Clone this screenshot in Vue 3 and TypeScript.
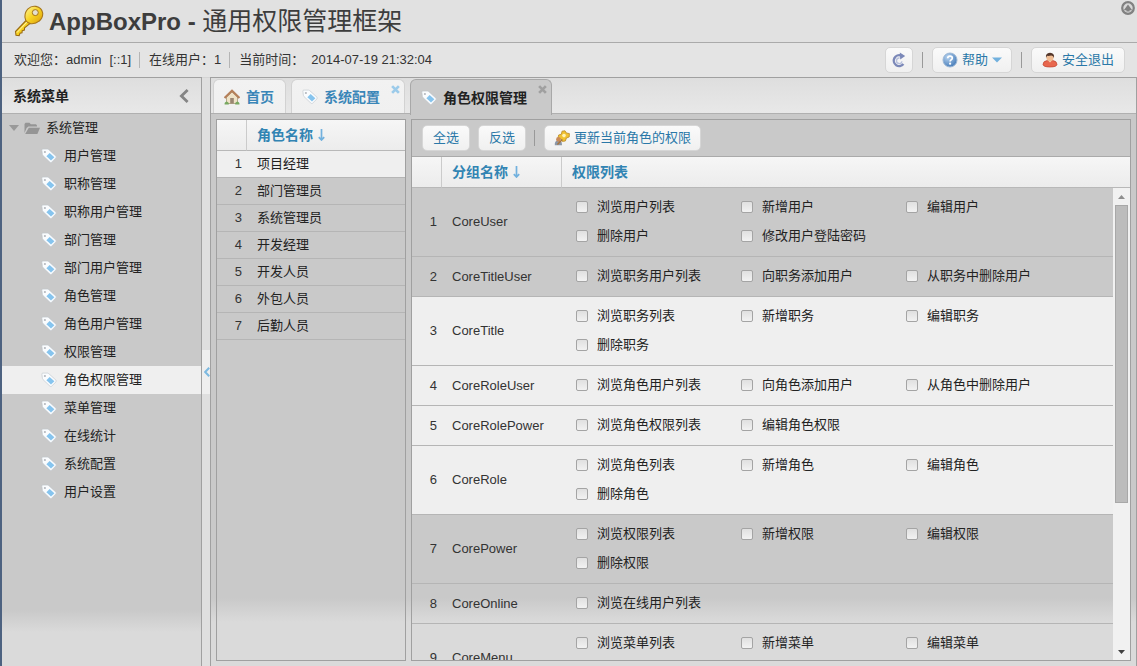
<script setup lang="ts">
import { ref } from 'vue'

interface Role { id: number; name: string }
interface PowerGroup { id: number; name: string; selected: boolean; powers: string[] }

const menu: string[] = [
  '用户管理', '职称管理', '职称用户管理', '部门管理', '部门用户管理', '角色管理', '角色用户管理',
  '权限管理', '角色权限管理', '菜单管理', '在线统计', '系统配置', '用户设置',
]
const activeMenu = ref('角色权限管理')

const roles: Role[] = ['项目经理', '部门管理员', '系统管理员', '开发经理', '开发人员', '外包人员', '后勤人员']
  .map((name, i) => ({ id: i + 1, name }))
const activeRole = ref(1)

const groups = ref<PowerGroup[]>([
  { id: 1, name: 'CoreUser', selected: false, powers: ['浏览用户列表', '新增用户', '编辑用户', '删除用户', '修改用户登陆密码'] },
  { id: 2, name: 'CoreTitleUser', selected: false, powers: ['浏览职务用户列表', '向职务添加用户', '从职务中删除用户'] },
  { id: 3, name: 'CoreTitle', selected: true, powers: ['浏览职务列表', '新增职务', '编辑职务', '删除职务'] },
  { id: 4, name: 'CoreRoleUser', selected: true, powers: ['浏览角色用户列表', '向角色添加用户', '从角色中删除用户'] },
  { id: 5, name: 'CoreRolePower', selected: true, powers: ['浏览角色权限列表', '编辑角色权限'] },
  { id: 6, name: 'CoreRole', selected: true, powers: ['浏览角色列表', '新增角色', '编辑角色', '删除角色'] },
  { id: 7, name: 'CorePower', selected: false, powers: ['浏览权限列表', '新增权限', '编辑权限', '删除权限'] },
  { id: 8, name: 'CoreOnline', selected: false, powers: ['浏览在线用户列表'] },
  { id: 9, name: 'CoreMenu', selected: false, powers: ['浏览菜单列表', '新增菜单', '编辑菜单', '删除菜单'] },
])
const checked = ref<string[]>([])

function allKeys(): string[] {
  return groups.value.flatMap((g) => g.powers.map((p) => g.name + p))
}
function selectAll(): void {
  checked.value = allKeys()
}
function invert(): void {
  checked.value = allKeys().filter((k) => !checked.value.includes(k))
}
</script>

<template>
  <div class="app">
    <svg class="defs" aria-hidden="true">
      <defs>
        <linearGradient id="gold" x1="0" y1="0" x2="1" y2="1">
          <stop offset="0" stop-color="#fff6a0" />
          <stop offset="0.5" stop-color="#f7d21f" />
          <stop offset="1" stop-color="#d99a10" />
        </linearGradient>
        <radialGradient id="orb" cx="0.35" cy="0.3" r="0.8">
          <stop offset="0" stop-color="#b8d4f0" />
          <stop offset="1" stop-color="#3c74b4" />
        </radialGradient>
      </defs>
      <symbol id="tag" viewBox="0 0 16 16">
        <path d="M0.9 2.2 Q0.8 1.2 1.8 1.1 L6.4 1.1 Q7.2 1.2 7.8 1.7 L15 8.2 Q15.7 9 15 9.8 L10.6 14.2 Q9.8 14.9 9 14.2 L2 7.6 Q1.5 7 1.4 6.4 Z" fill="#fafcfe" stroke="#bcc3ca" stroke-width="0.6" />
        <circle cx="3.9" cy="4" r="1.1" fill="#b4b9bf" />
        <path d="M8.6 4.9 L13.4 9.2 L10 12.6 L5.4 8.2 Z" fill="#86c4ee" />
      </symbol>
    </svg>

    <header class="banner">
      <svg class="key" viewBox="0 0 32 32" aria-hidden="true">
        <path d="M14 14.5 L2.5 26.5 L3 30.2 L6.2 30.6 L7 28.2 L9 27.8 L9.2 25.6 L11.4 25 L11.6 22.8 L18.2 17.6 Z" fill="url(#gold)" stroke="#9a6b12" stroke-width="1.1" />
        <path d="M4 27.5 L15 16" stroke="#fff4a8" stroke-width="1" />
        <path d="M15 3.8 Q18.5 0.5 23 1.4 Q28.8 2.6 29.7 8 Q30 13 26 16.2 Q22.5 19.2 17.4 18.6 Q12.6 17.4 12 12.5 Q11.6 7 15 3.8 Z" fill="url(#gold)" stroke="#a6761a" stroke-width="1.1" />
        <circle cx="22.3" cy="7.6" r="3" fill="#e4e0cf" stroke="#a6761a" stroke-width="1" />
      </svg>
      <h1>AppBoxPro - <span>通用权限管理框架</span></h1>
      <button class="collapse-top" aria-label="折叠">
        <svg viewBox="0 0 14 14"><circle cx="7" cy="7" r="5.8" fill="#d8d8d8" stroke="#818181" stroke-width="2.2" /><path d="M2.8 9.2 L7 3.6 L11.2 9.2 H8.6 V10.6 H5.4 V9.2 Z" fill="#818181" /></svg>
      </button>
    </header>

    <div class="statusbar">
      <span>欢迎您：admin</span><span class="ip">[::1]</span>
      <i class="sep"></i>
      <span>在线用户：1</span>
      <i class="sep"></i>
      <span>当前时间：</span><time class="time">2014-07-19 21:32:04</time>
      <div class="actions">
        <button class="btn icon-only" aria-label="刷新">
          <svg class="ico" viewBox="0 0 16 16"><path d="M12.4 12 A5.4 5.4 0 1 1 10.2 3.6" fill="none" stroke="#7b88b8" stroke-width="2.4" /><path d="M8.8 0.4 L14.2 4 L9.2 7.4 Z" fill="#7b88b8" /><path d="M11 9.4 A2.8 2.8 0 1 1 8.6 6" fill="none" stroke="#b7c0dc" stroke-width="1.4" /></svg>
        </button>
        <i class="sep dark"></i>
        <button class="btn tight">
          <svg class="ico" viewBox="0 0 16 16"><circle cx="8" cy="8" r="7" fill="url(#orb)" stroke="#9db8d6" /><path d="M5.7 6.3 Q5.8 4.1 8 4.1 Q10.3 4.1 10.3 6 Q10.3 7.2 9 7.9 Q8.1 8.4 8.1 9.6" fill="none" stroke="#fff" stroke-width="1.7" /><circle cx="8.1" cy="11.7" r="1.1" fill="#fff" /></svg>
          帮助
          <svg class="caret" viewBox="0 0 10 6"><path d="M0 0.5 H10 L5 5.5 Z" fill="#72b1de" /></svg>
        </button>
        <i class="sep dark"></i>
        <button class="btn">
          <svg class="ico" viewBox="0 0 16 16"><path d="M1 12.4 Q1.2 9 5 8.6 L11 8.6 Q14.8 9 15 12.4 Q14.6 15 8 15 Q1.4 15 1 12.4 Z" fill="#e8674e" stroke="#bf4430" stroke-width="0.7" /><path d="M6.2 8.6 L8 10.4 L9.8 8.6 Z" fill="#f9d9c0" /><ellipse cx="8" cy="5.6" rx="3.6" ry="3.8" fill="#f0bd94" /><path d="M4 6 Q3.2 1 8 0.8 Q12.8 1 12 6 Q11.4 3.8 9.4 3.6 Q6.4 4.2 5.2 3.8 Q4.4 4.6 4 6 Z" fill="#54362a" /></svg>
          安全退出
        </button>
      </div>
    </div>

    <div class="body">
      <aside class="sidebar">
        <div class="side-head">
          <h2>系统菜单</h2>
          <button class="bare" aria-label="收起菜单"><svg class="chev" viewBox="0 0 10 14"><path d="M8.6 1 L2.4 7 L8.6 13" fill="none" stroke="#858585" stroke-width="2.8" /></svg></button>
        </div>
        <nav>
          <a class="root" href="#system">
            <svg class="tri" viewBox="0 0 10 6"><path d="M0 0 H10 L5 6 Z" fill="#999" /></svg>
            <svg class="folder" viewBox="0 0 16 13"><path d="M0.5 11 V2 L1.5 0.8 H5.5 L6.8 2.2 H12 L13 3.4 V4.6 H4.4 L2.6 6 Z" fill="#959595" /><path d="M4.8 5.8 H16 L13.4 12 H1.2 Z" fill="#959595" /></svg>
            系统管理
          </a>
          <a
            v-for="item in menu" :key="item" class="leaf" :class="{ active: item === activeMenu }"
            href="#menu" @click.prevent="activeMenu = item"
          ><svg class="ico"><use href="#tag" /></svg>{{ item }}</a>
        </nav>
      </aside>

      <div class="splitter">
        <button aria-label="折叠面板"><svg viewBox="0 0 6 10"><path d="M5.2 0.8 L1.2 5 L5.2 9.2" fill="none" stroke="#7db9e0" stroke-width="2" /></svg></button>
      </div>

      <main class="main">
        <div class="tabs">
          <div class="tab home">
            <button class="tab-label">
              <svg class="ico" viewBox="0 0 16 16"><path d="M2.5 8 V14.5 H13.5 V8 L8 3 Z" fill="#efe3c8" stroke="#9c8c6a" stroke-width="0.7" /><path d="M0.6 9 L8 1.8 L15.4 9" fill="none" stroke="#b5805a" stroke-width="2.2" /><rect x="6.2" y="9" width="3.6" height="5.5" fill="#9a8672" /><path d="M0.6 14 Q2.5 11 4.8 14 V15.4 H0.6 Z M11.2 14 Q13.5 11 15.4 14 V15.4 H11.2 Z" fill="#78a860" /></svg>
              首页
            </button>
          </div>
          <div class="tab">
            <button class="tab-label"><svg class="ico"><use href="#tag" /></svg>系统配置</button>
            <button class="close" aria-label="关闭系统配置"><svg viewBox="0 0 8 8"><path d="M1 1 L7 7 M7 1 L1 7" stroke="#9ccbea" stroke-width="2.4" /></svg></button>
          </div>
          <div class="tab current">
            <button class="tab-label"><svg class="ico"><use href="#tag" /></svg>角色权限管理</button>
            <button class="close" aria-label="关闭角色权限管理"><svg viewBox="0 0 8 8"><path d="M1 1 L7 7 M7 1 L1 7" stroke="#a0a0a0" stroke-width="2.4" /></svg></button>
          </div>
        </div>

        <div class="panes">
          <section class="grid roles">
            <table>
              <colgroup><col class="c-num"><col></colgroup>
              <thead>
                <tr>
                  <th></th>
                  <th>角色名称<svg class="sort" viewBox="0 0 7 12"><path d="M3.5 0 V10.5 M0.8 8.2 L3.5 11 L6.2 8.2" fill="none" stroke="#72b1de" stroke-width="1.7" /></svg></th>
                </tr>
              </thead>
              <tbody>
                <tr v-for="r in roles" :key="r.id" :class="{ on: r.id === activeRole }" @click="activeRole = r.id">
                  <td class="num">{{ r.id }}</td>
                  <td>{{ r.name }}</td>
                </tr>
              </tbody>
            </table>
          </section>

          <section class="grid powers">
            <div class="toolbar">
              <button class="btn" @click="selectAll">全选</button>
              <button class="btn" @click="invert">反选</button>
              <i class="sep dark"></i>
              <button class="btn tight">
                <svg class="ico" viewBox="0 0 16 16"><path d="M8 1.2 L11 0.8 L12.4 3 L15.4 3.6 L15.2 7 L12.4 8 L11.4 11 L8.4 11.4 L7 9 L4 8.4 L4.6 5 L7.4 4.2 Z" fill="#f1c231" stroke="#b98a2c" stroke-width="0.8" /><circle cx="10" cy="5.6" r="1.8" fill="#fff3ba" /><path d="M0.8 15.2 Q0.4 11.4 3.4 10.6 L6.4 10.8 Q8.2 12 8 15.2 Z" fill="#8b97a8" /><circle cx="4.4" cy="9.4" r="2.3" fill="#c98a58" /><path d="M3.4 14.4 L8.4 9.4" stroke="#a8743c" stroke-width="1.4" /></svg>
                更新当前角色的权限
              </button>
            </div>
            <table>
              <colgroup><col class="c-num"><col class="c-name"><col></colgroup>
              <thead>
                <tr>
                  <th></th>
                  <th>分组名称<svg class="sort" viewBox="0 0 7 12"><path d="M3.5 0 V10.5 M0.8 8.2 L3.5 11 L6.2 8.2" fill="none" stroke="#72b1de" stroke-width="1.7" /></svg></th>
                  <th>权限列表</th>
                </tr>
              </thead>
            </table>
            <div class="scroller">
              <div class="viewport">
                <table>
                  <colgroup><col class="c-num"><col class="c-name"><col></colgroup>
                  <tbody>
                    <tr v-for="g in groups" :key="g.id" :class="{ on: g.selected }">
                      <td class="num">{{ g.id }}</td>
                      <td>{{ g.name }}</td>
                      <td class="list">
                        <div class="checks">
                          <label v-for="p in g.powers" :key="p"><input v-model="checked" type="checkbox" :value="g.name + p">{{ p }}</label>
                        </div>
                      </td>
                    </tr>
                  </tbody>
                </table>
              </div>
              <div class="scrollbar" aria-hidden="true">
                <svg class="arrow" viewBox="0 0 7 4"><path d="M0 4 H7 L3.5 0 Z" fill="#8e8e8e" /></svg>
                <div class="track"><div class="thumb"></div></div>
                <svg class="arrow" viewBox="0 0 7 4"><path d="M0 0 H7 L3.5 4 Z" fill="#404040" /></svg>
              </div>
            </div>
          </section>
        </div>
      </main>
    </div>
  </div>
</template>

<style>
html, body { margin: 0; overflow: hidden; }
</style>

<style scoped>
* { box-sizing: border-box; }
.app {
  display: flex; flex-direction: column; height: 100vh;
  border-left: 2px solid #4d6280; background: #e3e3e3; color: #222;
  font: 13px/20px "Liberation Sans", "Noto Sans CJK SC", sans-serif;
}
.defs { position: absolute; width: 0; height: 0; }
button { font: inherit; color: inherit; border: 0; margin: 0; padding: 0; background: none; cursor: pointer; }
a { color: inherit; text-decoration: none; }
svg { display: block; flex: none; }
.ico { width: 16px; height: 16px; }

.banner { position: relative; display: flex; align-items: center; gap: 4px; height: 43px; padding-left: 11px; border-bottom: 1px solid #aaa; background: #e1e1e1; flex: none; }
.key { width: 32px; height: 32px; }
h1 { margin: 0; font-size: 24px; line-height: 32px; font-weight: bold; color: #3d3d3d; white-space: pre; }
h1 span { font-size: 25px; font-weight: normal; }
.collapse-top { position: absolute; top: 1px; right: 2px; }
.collapse-top svg { width: 14px; height: 14px; }

.statusbar { display: flex; align-items: center; height: 34px; padding: 0 12px; color: #333; flex: none; background: #e4e4e4; }
.ip { margin-left: 8px; }
.time { margin-left: 7px; }
.sep { width: 1px; height: 16px; margin: 0 9px 0 8px; background: #b5b5b5; }
.sep.dark { background: #999; margin: 0 9px; }
.actions { margin-left: auto; display: flex; align-items: center; }
.btn {
  display: inline-flex; align-items: center; gap: 4px; height: 26px; padding: 0 10px;
  border: 1px solid #d6d6d6; border-radius: 5px; color: #2a78a8; white-space: nowrap;
  background: linear-gradient(#fafafa, #f0f0f0);
}
.btn.tight { padding: 0 9px; }
.btn.icon-only { padding: 0 5px; }
.caret { width: 10px; height: 6px; }

.body { display: flex; flex: 1; min-height: 0; }
.sidebar {
  width: 200px; flex: none; display: flex; flex-direction: column;
  border: 1px solid #a0a0a0; border-width: 1px 1px 0 0;
  background: linear-gradient(#c9c9c9 calc(100% - 56px), #dadada calc(100% - 34px));
}
.side-head { display: flex; align-items: center; justify-content: space-between; height: 36px; padding: 0 12px 0 11px; border-bottom: 1px solid #b0b0b0; background: linear-gradient(#dedede, #e8e8e8); }
h2 { margin: 0; font-size: 14px; line-height: 20px; color: #222; }
.chev { width: 10px; height: 14px; }
nav a { display: flex; align-items: center; height: 28px; }
.root { padding-left: 7px; }
.tri { width: 10px; height: 6px; margin-right: 5px; }
.folder { width: 16px; height: 13px; margin-right: 6px; }
.leaf { padding-left: 39px; gap: 7px; }
.leaf.active { background: #efefef; }

.splitter { width: 8px; flex: none; display: flex; align-items: center; background: #dfdfdf; border-top: 1px solid #d4d4d4; }
.splitter button { width: 8px; height: 44px; display: flex; align-items: center; justify-content: flex-end; background: #efefef; }
.splitter svg { width: 6px; height: 10px; }

.main {
  flex: 1; min-width: 0; display: flex; flex-direction: column;
  border: 1px solid #a0a0a0; border-bottom: 0;
  background: linear-gradient(#c9c9c9 calc(100% - 68px), #dadada calc(100% - 44px));
}
.tabs { display: flex; height: 36px; padding: 1px 2px 0; gap: 5px; flex: none; border-bottom: 1px solid #b0b0b0; background: linear-gradient(#dedede, #e8e8e8); }
.tab { display: flex; height: 34px; border: 1px solid #d2d2d2; border-bottom: 0; border-radius: 6px 6px 0 0; color: #3a86b8; background: linear-gradient(#f2f2f2, #f0f0f0); }
.tab-label { display: flex; align-items: center; gap: 6px; padding: 0 9px 0 10px; font-weight: bold; font-size: 14px; white-space: nowrap; }
.home .tab-label { padding-right: 11px; }
.close { height: 9px; margin: 5px 4px 0 2px; }
.close svg { width: 9px; height: 9px; }
.tab.current { height: 36px; background: #c9c9c9; border-color: #a8a8a8; color: #222; }

.panes { flex: 1; min-height: 0; display: flex; gap: 5px; padding: 5px; }
.grid { border: 1px solid #a0a0a0; display: flex; flex-direction: column; min-width: 0; overflow: hidden; }
.roles { width: 190px; flex: none; }
.powers { flex: 1; }
table { width: 100%; table-layout: fixed; border-collapse: separate; border-spacing: 0; flex: none; }
.c-num { width: 30px; }
.c-name { width: 120px; }
th { height: 31px; padding: 0 10px; text-align: left; font-size: 14px; color: #3184b3; white-space: nowrap; border-bottom: 1px solid #b8b8b8; border-right: 1px solid #cbcbcb; background: linear-gradient(#f6f6f6, #ececec); }
th:last-child { border-right: 0; }
.sort { display: inline-block; width: 7px; height: 12px; margin-left: 5px; vertical-align: -1px; }
td { height: 27px; padding: 0 10px; border-bottom: 1px solid #b5b5b5; color: #222; }
.powers td { color: #333; }
td.num { padding: 0 5px 0 0; text-align: right; color: #333; }
tr.on td { background: #efefef; }

.toolbar { display: flex; align-items: center; height: 37px; padding: 0 10px; flex: none; border-bottom: 1px solid #aaa; }
.toolbar .btn + .btn { margin-left: 8px; }
.toolbar .sep { margin: 0 9px 0 8px; }

.scroller { flex: 1; min-height: 0; display: flex; }
.viewport { flex: 1; min-width: 0; overflow: hidden; }
.powers td.list { padding: 4px 0 6px 14px; }
.checks { display: grid; grid-template-columns: repeat(auto-fill, 165px); grid-auto-rows: 29px; }
.checks label { display: flex; align-items: center; gap: 9px; color: #222; white-space: nowrap; }
.checks input { appearance: none; width: 12px; height: 12px; margin: 0; border: 1px solid #a4a4a4; border-radius: 2px; background: linear-gradient(#e0e0e0, #f2f2f2); }
.checks input:checked { background: #3a86b8; }
.scrollbar { width: 17px; flex: none; display: flex; flex-direction: column; align-items: center; background: #f1f1f1; }
.arrow { width: 7px; height: 4px; margin: 7px 0 6px; }
.track { flex: 1; width: 13px; }
.thumb { height: 68%; background: #bcbcbc; border: 1px solid #a8a8a8; }
</style>
